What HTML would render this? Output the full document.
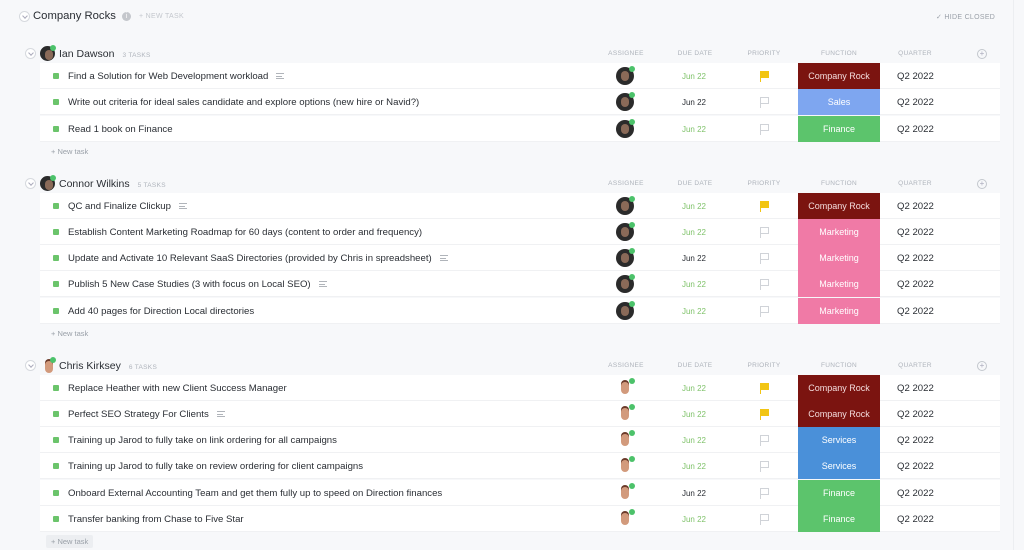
<!DOCTYPE html>
<html><head><meta charset="utf-8"><style>
*{margin:0;padding:0;box-sizing:border-box}
body{width:1024px;height:550px;background:#f7f8fa;font-family:"Liberation Sans",sans-serif;position:relative;overflow:hidden;color:#2a2e34}
.a{position:absolute}
.panelb{position:absolute;left:1013px;top:0;width:1px;height:550px;background:#eceef1}
.title{left:33px;top:10px;font-size:11.3px;color:#2a2e34}
.circ{position:absolute;width:11px;height:11px;border:1px solid #d6d9de;border-radius:50%;background:#fff}
.circ:after{content:"";position:absolute;left:3px;top:2px;width:3px;height:3px;border-right:1px solid #aab;border-bottom:1px solid #aab;transform:rotate(45deg)}
.hdr{position:absolute;font-size:10.5px;color:#2a2e34}
.cnt{font-size:6.5px;color:#aeb3bb;letter-spacing:.3px;margin-left:8px}
.ch{position:absolute;font-size:6.5px;color:#aeb3bb;letter-spacing:.3px;transform:translateX(-50%)}
.row{position:absolute;left:40px;width:960px;height:26px;background:#fff;border-bottom:1px solid #f0f1f3}
.sq{position:absolute;left:13px;top:10px;width:6px;height:6px;background:#6bc46b;border-radius:1px}
.t{position:absolute;left:28px;top:8px;font-size:9.6px;color:#2a2e34;white-space:nowrap}
.ln{display:inline-block;width:8px;height:6px;margin-left:8px;border-top:1px solid #b0b4ba;border-bottom:1px solid #b0b4ba;position:relative;vertical-align:middle}
.ln:after{content:"";position:absolute;left:0;top:1.5px;width:6px;height:1px;background:#b0b4ba}
.av{position:absolute;left:576px;top:4px;width:18px;height:18px;border-radius:50%;background:#2b2b2b}
.av:before{content:"";position:absolute;left:5px;top:4px;width:8px;height:10px;border-radius:4px;background:#8a6a58}
.av:after{content:"";position:absolute;right:-1px;top:-1px;width:6px;height:6px;border-radius:50%;background:#4cc26a}
.av2{background:transparent}
.av2:before{left:5px;top:3px;width:8px;height:12px;background:#d29a7c;box-shadow:0 -2px 0 #6b3b2a}
.d{position:absolute;left:614px;width:80px;text-align:center;top:9px;font-size:8px;color:#7fc26a}
.d.k{color:#2a2e34}
.f{position:absolute;left:720px;top:8px;width:8px;height:11px}
.f:before{content:"";position:absolute;left:0;top:0;width:1px;height:11px;background:#d0d3d8}
.f:after{content:"";position:absolute;left:1px;top:0;width:7px;height:5px;border:1px solid #d0d3d8;border-left:0}
.f.y:before{background:#f2c513}.f.y:after{background:#f2c513;border-color:#f2c513}
.fn{position:absolute;left:758px;top:0;width:82px;height:26px;color:#fff;font-size:9px;text-align:center;line-height:26px}
.cr{background:#7b1410;color:#f3dcdc}.sa{background:#7ea6f0}.fi{background:#5cc46c}.mk{background:#f07aa6}.sv{background:#4a90d9}
.q{position:absolute;left:857px;top:8px;font-size:9.6px;color:#2a2e34}
.nt{position:absolute;font-size:7.5px;color:#9aa0a8}
.plus{position:absolute;width:10px;height:10px;border:1px solid #c3c7cd;border-radius:50%;font-size:8px;line-height:8px;text-align:center;color:#aab}
</style></head><body>
<div class="panelb"></div>
<div class="circ" style="left:19px;top:11px"></div>
<div class="a title">Company Rocks</div>
<div class="a" style="left:122px;top:12px;width:9px;height:9px;border-radius:50%;background:#c4c7cc;color:#fff;font-size:7px;text-align:center;line-height:9px">i</div>
<div class="a" style="left:139px;top:13px;font-size:7px;color:#c3c7cd;letter-spacing:.3px">+ NEW TASK</div>
<div class="a" style="left:936px;top:13px;font-size:7px;color:#9aa0a8;letter-spacing:.3px">✓ HIDE CLOSED</div>

<div class="circ" style="left:25px;top:48px"></div>
<div class="av" style="left:40px;top:46px;width:15px;height:15px;position:absolute"></div>
<div class="hdr" style="left:59px;top:48px">Ian Dawson<span class="cnt">3 TASKS</span></div>
<div class="ch" style="left:626px;top:50px">ASSIGNEE</div><div class="ch" style="left:695px;top:50px">DUE DATE</div><div class="ch" style="left:764px;top:50px">PRIORITY</div><div class="ch" style="left:839px;top:50px">FUNCTION</div><div class="ch" style="left:915px;top:50px">QUARTER</div>
<div class="plus" style="left:977px;top:49px">+</div>

<div class="row" style="top:63px"><div class="sq"></div><div class="t">Find a Solution for Web Development workload<span class="ln"></span></div><div class="av"></div><div class="d">Jun 22</div><div class="f y"></div><div class="fn cr">Company Rock</div><div class="q">Q2 2022</div></div>
<div class="row" style="top:89px"><div class="sq"></div><div class="t">Write out criteria for ideal sales candidate and explore options (new hire or Navid?)</div><div class="av"></div><div class="d k">Jun 22</div><div class="f"></div><div class="fn sa">Sales</div><div class="q">Q2 2022</div></div>
<div class="row" style="top:116px"><div class="sq"></div><div class="t">Read 1 book on Finance</div><div class="av"></div><div class="d">Jun 22</div><div class="f"></div><div class="fn fi">Finance</div><div class="q">Q2 2022</div></div>
<div class="nt" style="left:51px;top:147px">+ New task</div>

<div class="circ" style="left:25px;top:178px"></div>
<div class="av" style="left:40px;top:176px;width:15px;height:15px;position:absolute"></div>
<div class="hdr" style="left:59px;top:178px">Connor Wilkins<span class="cnt">5 TASKS</span></div>
<div class="ch" style="left:626px;top:180px">ASSIGNEE</div><div class="ch" style="left:695px;top:180px">DUE DATE</div><div class="ch" style="left:764px;top:180px">PRIORITY</div><div class="ch" style="left:839px;top:180px">FUNCTION</div><div class="ch" style="left:915px;top:180px">QUARTER</div>
<div class="plus" style="left:977px;top:179px">+</div>

<div class="row" style="top:193px"><div class="sq"></div><div class="t">QC and Finalize Clickup<span class="ln"></span></div><div class="av"></div><div class="d">Jun 22</div><div class="f y"></div><div class="fn cr">Company Rock</div><div class="q">Q2 2022</div></div>
<div class="row" style="top:219px"><div class="sq"></div><div class="t">Establish Content Marketing Roadmap for 60 days (content to order and frequency)</div><div class="av"></div><div class="d">Jun 22</div><div class="f"></div><div class="fn mk">Marketing</div><div class="q">Q2 2022</div></div>
<div class="row" style="top:245px"><div class="sq"></div><div class="t">Update and Activate 10 Relevant SaaS Directories (provided by Chris in spreadsheet)<span class="ln"></span></div><div class="av"></div><div class="d k">Jun 22</div><div class="f"></div><div class="fn mk">Marketing</div><div class="q">Q2 2022</div></div>
<div class="row" style="top:271px"><div class="sq"></div><div class="t">Publish 5 New Case Studies (3 with focus on Local SEO)<span class="ln"></span></div><div class="av"></div><div class="d">Jun 22</div><div class="f"></div><div class="fn mk">Marketing</div><div class="q">Q2 2022</div></div>
<div class="row" style="top:298px"><div class="sq"></div><div class="t">Add 40 pages for Direction Local directories</div><div class="av"></div><div class="d">Jun 22</div><div class="f"></div><div class="fn mk">Marketing</div><div class="q">Q2 2022</div></div>
<div class="nt" style="left:51px;top:329px">+ New task</div>

<div class="circ" style="left:25px;top:360px"></div>
<div class="av av2" style="left:40px;top:358px;width:15px;height:15px;position:absolute"></div>
<div class="hdr" style="left:59px;top:360px">Chris Kirksey<span class="cnt">6 TASKS</span></div>
<div class="ch" style="left:626px;top:362px">ASSIGNEE</div><div class="ch" style="left:695px;top:362px">DUE DATE</div><div class="ch" style="left:764px;top:362px">PRIORITY</div><div class="ch" style="left:839px;top:362px">FUNCTION</div><div class="ch" style="left:915px;top:362px">QUARTER</div>
<div class="plus" style="left:977px;top:361px">+</div>

<div class="row" style="top:375px"><div class="sq"></div><div class="t">Replace Heather with new Client Success Manager</div><div class="av av2"></div><div class="d">Jun 22</div><div class="f y"></div><div class="fn cr">Company Rock</div><div class="q">Q2 2022</div></div>
<div class="row" style="top:401px"><div class="sq"></div><div class="t">Perfect SEO Strategy For Clients<span class="ln"></span></div><div class="av av2"></div><div class="d">Jun 22</div><div class="f y"></div><div class="fn cr">Company Rock</div><div class="q">Q2 2022</div></div>
<div class="row" style="top:427px"><div class="sq"></div><div class="t">Training up Jarod to fully take on link ordering for all campaigns</div><div class="av av2"></div><div class="d">Jun 22</div><div class="f"></div><div class="fn sv">Services</div><div class="q">Q2 2022</div></div>
<div class="row" style="top:453px"><div class="sq"></div><div class="t">Training up Jarod to fully take on review ordering for client campaigns</div><div class="av av2"></div><div class="d">Jun 22</div><div class="f"></div><div class="fn sv">Services</div><div class="q">Q2 2022</div></div>
<div class="row" style="top:480px"><div class="sq"></div><div class="t">Onboard External Accounting Team and get them fully up to speed on Direction finances</div><div class="av av2"></div><div class="d k">Jun 22</div><div class="f"></div><div class="fn fi">Finance</div><div class="q">Q2 2022</div></div>
<div class="row" style="top:506px"><div class="sq"></div><div class="t">Transfer banking from Chase to Five Star</div><div class="av av2"></div><div class="d">Jun 22</div><div class="f"></div><div class="fn fi">Finance</div><div class="q">Q2 2022</div></div>
<div class="nt" style="left:46px;top:535px;background:#eceef1;padding:2px 5px;border-radius:2px">+ New task</div>
</body></html>
